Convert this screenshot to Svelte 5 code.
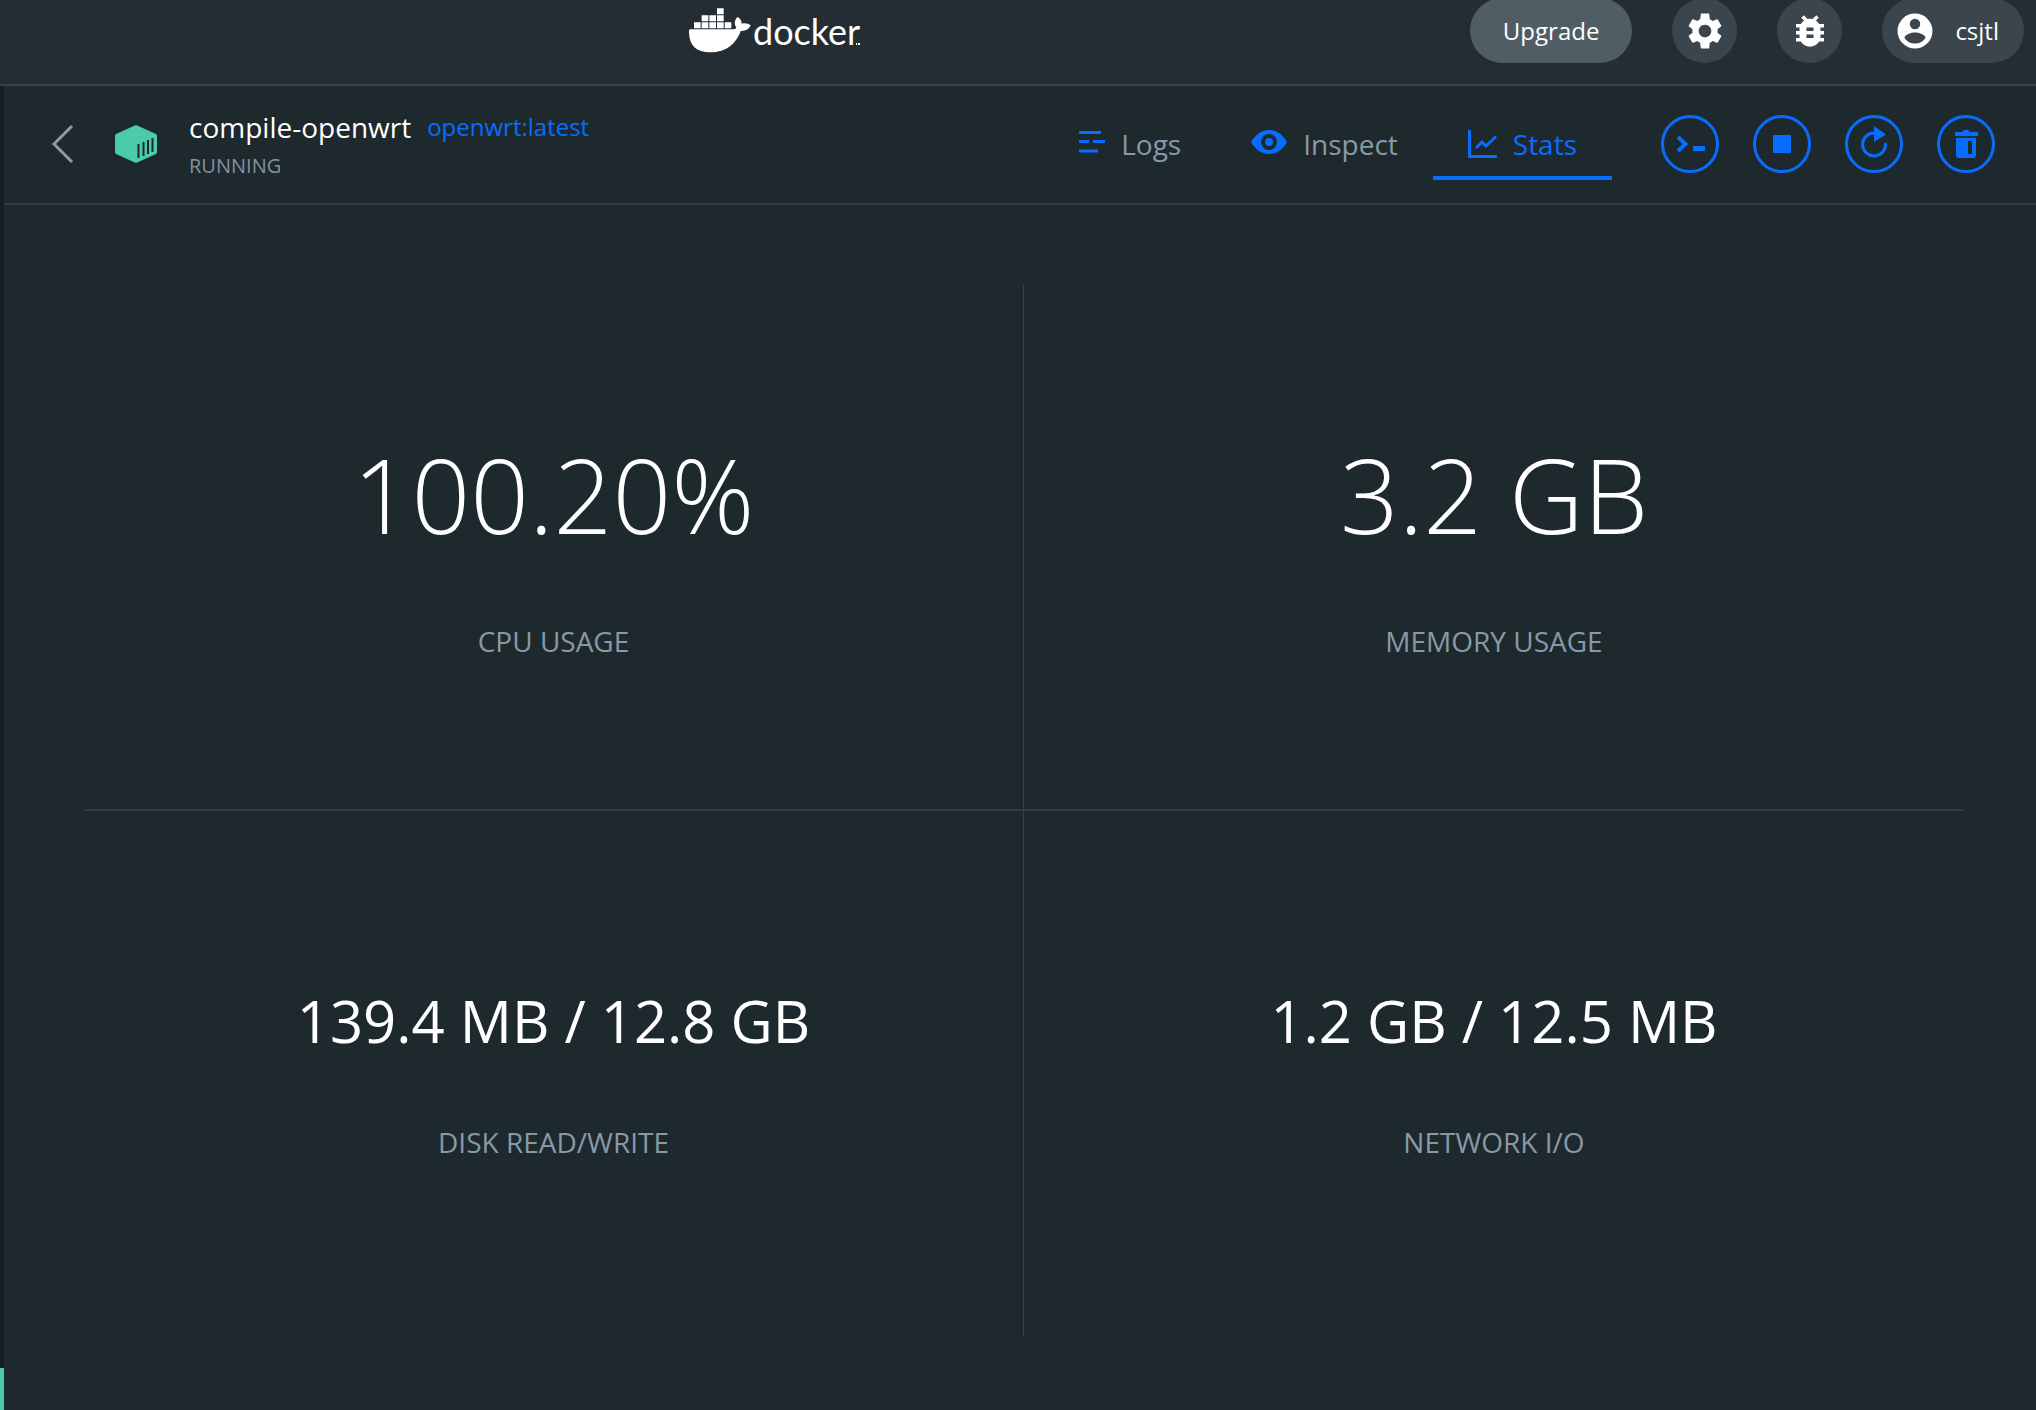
<script>
  const stats = [
    { label: 'CPU USAGE', value: '100.20%', large: true },
    { label: 'MEMORY USAGE', value: '3.2 GB', large: true },
    { label: 'DISK READ/WRITE', value: '139.4 MB / 12.8 GB', large: false },
    { label: 'NETWORK I/O', value: '1.2 GB / 12.5 MB', large: false },
  ];
</script>

<div class="app">
  <header class="topbar">
    <div class="brand">
      <svg class="whale" viewBox="54 20 186 135" aria-hidden="true">
        <path d="M138 21h20v18h-20zM92 42h20v18H92zM115 42h20v18h-20zM138 42h20v18h-20zM69 63h20v18H69zM92 63h20v18H92zM115 63h20v18h-20zM138 63h20v18h-20zM161 63h20v18h-20z" />
        <path d="M57 84H183C190 84 194 82 196 79C189 69 190 55 200 47C208 51 212 58 212 67C221 64 232 66 239 72C234 84 224 90 209 89C197 124 168 153 118 153C76 153 54 132 54 91C54 87 55 84 57 84Z" />
      </svg>
      <span class="wordmark">docker</span>
      <svg class="mark" viewBox="0 0 4 2" aria-hidden="true"><path d="M0 0h1v2H0zM2 0h2v2H2z" /></svg>
    </div>
    <nav class="account">
      <button class="pill upgrade">Upgrade</button>
      <button class="pill round" aria-label="Settings">
        <svg viewBox="0 0 24 24"><path d="M19.14 12.94c.04-.3.06-.61.06-.94 0-.32-.02-.64-.07-.94l2.03-1.58c.18-.14.23-.41.12-.61l-1.92-3.32c-.12-.22-.37-.29-.59-.22l-2.39.96c-.5-.38-1.03-.7-1.62-.94L14.400 2.300c-.04-.24-.24-.3-.48-.3h-3.840c-.24 0-.43.06-.47.3L9.250 5.350c-.59.24-1.13.57-1.62.94l-2.390-.96c-.22-.08-.47 0-.59.22L2.740 8.870c-.12.21-.08.47.12.61l2.030 1.580c-.05.3-.09.63-.09.94s.02.64.07.94l-2.030 1.580c-.18.14-.23.41-.12.61l1.920 3.320c.12.22.37.29.59.22l2.390-.96c.5.38 1.030.7 1.620.94l.36 3.050c.05.24.24.3.48.3h3.840c.24 0 .44-.06.47-.3l.36-3.050c.59-.24 1.130-.56 1.620-.94l2.390.96c.22.08.47 0 .59-.22l1.920-3.320c.12-.22.07-.47-.12-.61l-2.010-1.580zM12 15.600c-1.980 0-3.600-1.620-3.600-3.600s1.620-3.600 3.600-3.600 3.600 1.620 3.600 3.600-1.620 3.600-3.600 3.600z" /></svg>
      </button>
      <button class="pill round" aria-label="Troubleshoot">
        <svg viewBox="0 0 24 24"><path d="M20 8h-2.810c-.45-.78-1.070-1.450-1.820-1.960L17 4.410 15.590 3l-2.170 2.170C12.960 5.060 12.490 5 12 5s-.96.06-1.410.17L8.410 3 7 4.410l1.620 1.630C7.880 6.550 7.260 7.220 6.810 8H4v2h2.090c-.05.33-.09.66-.09 1v1H4v2h2v1c0 .34.04.67.09 1H4v2h2.810c1.040 1.790 2.970 3 5.190 3s4.150-1.210 5.190-3H20v-2h-2.090c.05-.33.09-.66.09-1v-1h2v-2h-2v-1c0-.34-.04-.67-.09-1H20V8zm-6 8h-4v-2h4v2zm0-4h-4v-2h4v2z" /></svg>
      </button>
      <button class="pill user">
        <svg viewBox="0 0 24 24"><path fill-rule="evenodd" d="M12 2a10 10 0 1 0 0 20 10 10 0 0 0 0-20zM12 5a3 3 0 1 1 0 6 3 3 0 0 1 0-6zM12 19.200a7.200 7.200 0 0 1-6-3.220c.03-1.990 4-3.080 6-3.080s5.970 1.090 6 3.080a7.200 7.200 0 0 1-6 3.220z" /></svg>
        <span>csjtl</span>
      </button>
    </nav>
  </header>

  <div class="body">
    <aside class="rail"><span class="status"></span></aside>

    <section class="container">
      <header class="detail">
        <button class="back" aria-label="Back">
          <svg viewBox="0 0 24 40"><path d="M22 2L4 20L22 38" /></svg>
        </button>
        <svg class="cube" viewBox="0 0 42 38" aria-hidden="true">
          <path class="shell" d="M21 0L41 9Q42 10 42 11V27Q42 28 41 29L21 38L1 29Q0 28 0 27V11Q0 10 1 9Z" />
          <path class="slats" d="M23.500 19V33M28.500 17V31M33 15V29M37.500 13V27" />
        </svg>
        <div class="identity">
          <div class="names">
            <h1>compile-openwrt</h1>
            <a href="#image">openwrt:latest</a>
          </div>
          <p>RUNNING</p>
        </div>

        <nav class="tabs">
          <a class="tab" href="#logs">
            <svg class="logs" viewBox="0 0 26 22"><path d="M0 1.500H22M0 10.500H10M14 10.500H26M0 20H19" /></svg>
            Logs
          </a>
          <a class="tab" href="#inspect">
            <svg class="eye" viewBox="0 0 36 24"><path fill-rule="evenodd" d="M18 0C26 0 32 5 36 12C32 19 26 24 18 24S4 19 0 12C4 5 10 0 18 0ZM18 4A8 8 0 1 0 18 20A8 8 0 1 0 18 4ZM18 8A4 4 0 1 1 18 16A4 4 0 1 1 18 8Z" /></svg>
            Inspect
          </a>
          <a class="tab active" href="#stats" aria-current="page">
            <svg class="chart" viewBox="0 0 29 28"><path d="M1.500 0V26.500H29M8 18L14 12L18 16L28 6.500" /></svg>
            Stats
          </a>
        </nav>

        <div class="actions">
          <button aria-label="Open terminal">
            <svg viewBox="0 0 52 52"><path class="line" d="M14 19L21.500 26L14 33" /><path d="M29 28h12v5H29z" /></svg>
          </button>
          <button aria-label="Stop">
            <svg viewBox="0 0 52 52"><path d="M17 17h18v18H17z" /></svg>
          </button>
          <button aria-label="Restart">
            <svg viewBox="0 0 52 52"><path class="line thin" d="M37.500 25A11.500 11.500 0 1 1 26 15" /><path d="M26 8L38 16.500L26 24Z" /></svg>
          </button>
          <button aria-label="Delete">
            <svg viewBox="0 0 52 52"><path fill-rule="evenodd" d="M15 14h7l2-2h4l2 2h8v4H15zM16 20h20v17q0 3-3 3H19q-3 0-3-3zM28 23v13h4V23z" /></svg>
          </button>
        </div>
      </header>

      <main>
        <dl class="grid">
          {#each stats as stat}
            <div class="cell">
              <dd class:large={stat.large}>{stat.value}</dd>
              <dt>{stat.label}</dt>
            </div>
          {/each}
        </dl>
      </main>
    </section>
  </div>
</div>

<style>
  :global(body) {
    background: #1e292e;
  }

  .app {
    display: flex;
    flex-direction: column;
    min-height: 100vh;
    font-family: 'Open Sans', 'Noto Sans', sans-serif;
    color: #fff;
  }

  .app :global(*) {
    box-sizing: border-box;
  }

  button {
    padding: 0;
    border: 0;
    background: none;
    color: inherit;
    font: inherit;
    cursor: pointer;
  }

  a {
    color: #086dfe;
    text-decoration: none;
  }

  svg {
    display: block;
    flex: none;
    fill: currentColor;
  }

  .topbar {
    display: grid;
    grid-template: 61px / 17fr 23fr;
    align-items: center;
    padding: 0 12px 23px 0;
    border-bottom: 2px solid #38434a;
    background: #232d33;
  }

  .brand {
    justify-self: end;
    display: flex;
    align-items: center;
  }

  .whale {
    width: 62px;
    height: 45px;
  }

  .wordmark {
    margin-left: 2px;
    font: 36px/48px Lato, 'Open Sans', sans-serif;
  }

  .mark {
    align-self: flex-end;
    width: 4px;
    height: 2px;
    margin: 0 0 10px -4px;
  }

  .account {
    justify-self: end;
    display: flex;
    gap: 40px;
  }

  .pill {
    display: flex;
    align-items: center;
    justify-content: center;
    height: 65px;
    border-radius: 33px;
    background: #3a454e;
    font-size: 24px;
  }

  .pill svg {
    width: 42px;
    height: 42px;
  }

  .round {
    width: 65px;
  }

  .upgrade {
    padding: 0 33px;
    background: #505d65;
  }

  .user {
    gap: 19px;
    padding: 0 25px 0 12px;
  }

  .body {
    flex: 1;
    display: flex;
  }

  .rail {
    display: flex;
    flex-direction: column;
    justify-content: flex-end;
    width: 4px;
    background: #151f27;
  }

  .status {
    height: 42px;
    background: #4bcba8;
  }

  .container {
    flex: 1;
    display: flex;
    flex-direction: column;
  }

  .detail {
    display: flex;
    align-items: center;
    height: 119px;
    padding: 0 41px 2px 46px;
    border-bottom: 2px solid #313c41;
  }

  .back svg {
    width: 24px;
    height: 40px;
    fill: none;
    stroke: #8d99a3;
    stroke-width: 3;
  }

  .cube {
    width: 42px;
    height: 38px;
    margin: 0 32px 0 41px;
  }

  .shell {
    fill: #4bcba8;
  }

  .slats {
    stroke: #1e292e;
    stroke-width: 2;
  }

  .names {
    display: flex;
    align-items: center;
    gap: 16px;
  }

  h1 {
    margin: 0;
    font-size: 28px;
    line-height: 44px;
    font-weight: 400;
  }

  .names a {
    font-size: 24px;
    line-height: 44px;
  }

  .identity p {
    margin: 0;
    font-size: 20px;
    line-height: 34px;
    color: #8293a0;
  }

  .tabs {
    display: flex;
    margin-left: auto;
  }

  .tab {
    display: flex;
    align-items: center;
    gap: 16px;
    height: 72px;
    padding: 0 35px;
    border: solid transparent;
    border-width: 4px 0;
    font-size: 28px;
    color: #8a99a5;
  }

  .tab svg {
    color: #086dfe;
    margin-bottom: 4px;
  }

  .tab .logs {
    width: 26px;
    height: 22px;
    stroke: currentColor;
    stroke-width: 3;
  }

  .eye {
    width: 36px;
    height: 24px;
  }

  .tab .chart {
    width: 29px;
    height: 28px;
    margin: 0;
    fill: none;
    stroke: currentColor;
    stroke-width: 3;
  }

  .active {
    border-bottom-color: #086dfe;
    color: #086dfe;
  }

  .actions {
    display: flex;
    gap: 34px;
    margin-left: 49px;
  }

  .actions button {
    width: 58px;
    height: 58px;
    border: 3px solid #086dfe;
    border-radius: 50%;
    color: #086dfe;
  }

  .line {
    fill: none;
    stroke: currentColor;
    stroke-width: 4;
  }

  .thin {
    stroke-width: 3;
  }

  main {
    flex: 1;
    display: flex;
    padding: 80px 72px 73px 80px;
  }

  .grid {
    flex: 1;
    display: grid;
    grid-template: 1fr 1fr / 1fr 1fr;
    margin: 0;
  }

  .cell {
    display: flex;
    flex-direction: column;
    align-items: center;
    justify-content: center;
    gap: 68px;
  }

  .cell:nth-child(odd) {
    border-right: 1px solid #38444a;
  }

  .cell:nth-child(-n + 2) {
    border-bottom: 2px solid #313c42;
  }

  dd {
    margin: 0;
    font-size: 58px;
    line-height: 68px;
  }

  .large {
    font-size: 103px;
    line-height: 120px;
    font-weight: 300;
  }

  dt {
    font-size: 28px;
    line-height: 38px;
    color: #8799a5;
  }
</style>
